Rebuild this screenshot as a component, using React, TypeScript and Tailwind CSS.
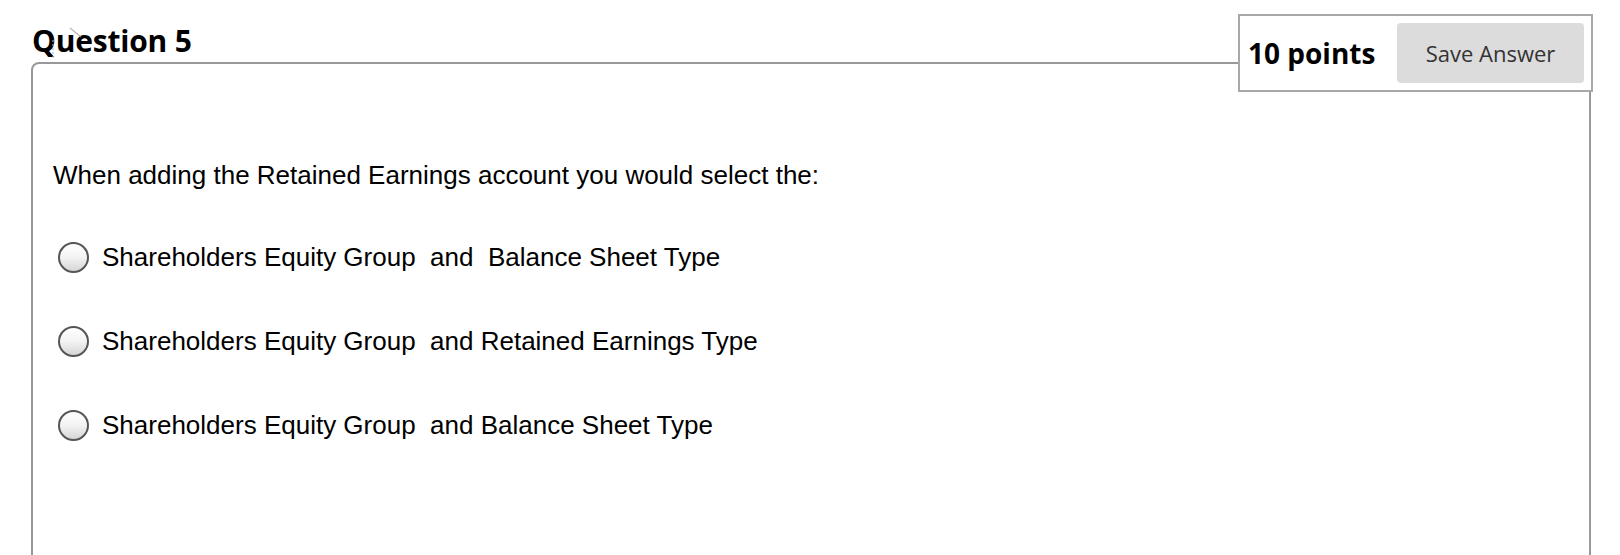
import React from 'react';

type Choice = {
  id: string;
  label: string;
};

const choices: Choice[] = [
  { id: 'c1', label: 'Shareholders Equity Group\u00a0 and\u00a0 Balance Sheet Type' },
  { id: 'c2', label: 'Shareholders Equity Group\u00a0 and Retained Earnings Type' },
  { id: 'c3', label: 'Shareholders Equity Group\u00a0 and Balance Sheet Type' },
];

const RadioDot: React.FC = () => (
  <span className="block h-[31px] w-[31px] shrink-0 rounded-full border-2 border-[#555555] bg-gradient-to-b from-white via-[#f3f3f3] to-[#d6d6d6]" />
);

const App: React.FC = () => {
  return (
    <div className="relative h-[555px] w-[1620px] overflow-hidden bg-white">
      <div className="pl-[31px] pr-[29px]">
        <h2 className="pt-[20px] pl-[1px] text-[30px] font-bold leading-[41px] tracking-[-0.2px] text-black [font-family:'Open_Sans',sans-serif]">
          Question 5
        </h2>

        <div className="mt-[1px] h-[600px] rounded-tl-[8px] rounded-tr-[8px] border-2 border-[#999999] pl-[20px] pt-[96px] [font-family:'Liberation_Sans',Arial,sans-serif]">
          <p className="text-[26px] leading-[30px] text-black">
            When adding the Retained Earnings account you would select the:
          </p>

          <div className="mt-[52px] flex flex-col gap-[54px] pl-[5px]">
            {choices.map((c) => (
              <label key={c.id} className="flex h-[30px] items-center gap-[13px]">
                <RadioDot />
                <span className="whitespace-pre text-[26px] leading-[30px] text-black">{c.label}</span>
              </label>
            ))}
          </div>
        </div>
      </div>

      {/* points + save, sits over the box border */}
      <div className="absolute right-[27px] top-[14px] flex h-[78px] w-[355px] items-center justify-between border-2 border-[#a8a8a8] bg-white pl-[8px] pr-[7px] [font-family:'Open_Sans',sans-serif]">
        <span className="text-[28px] font-bold text-black">10 points</span>
        <button
          type="button"
          className="h-[60px] w-[187px] rounded-[4px] bg-[#dcdcdc] text-[22px] text-[#333333]"
        >
          Save Answer
        </button>
      </div>

      {/* faint leftover chevron near the heading */}
      <svg className="absolute left-[50px] top-[26px] opacity-70" width="40" height="36" viewBox="0 0 40 36">
        <path d="M20 2 L31 11" stroke="#a0a0a0" strokeWidth="1.5" fill="none" />
        <path d="M3 14 L3 34" stroke="#b8b8b8" strokeWidth="1.5" strokeDasharray="2 2" fill="none" />
      </svg>
    </div>
  );
};

export default App;
